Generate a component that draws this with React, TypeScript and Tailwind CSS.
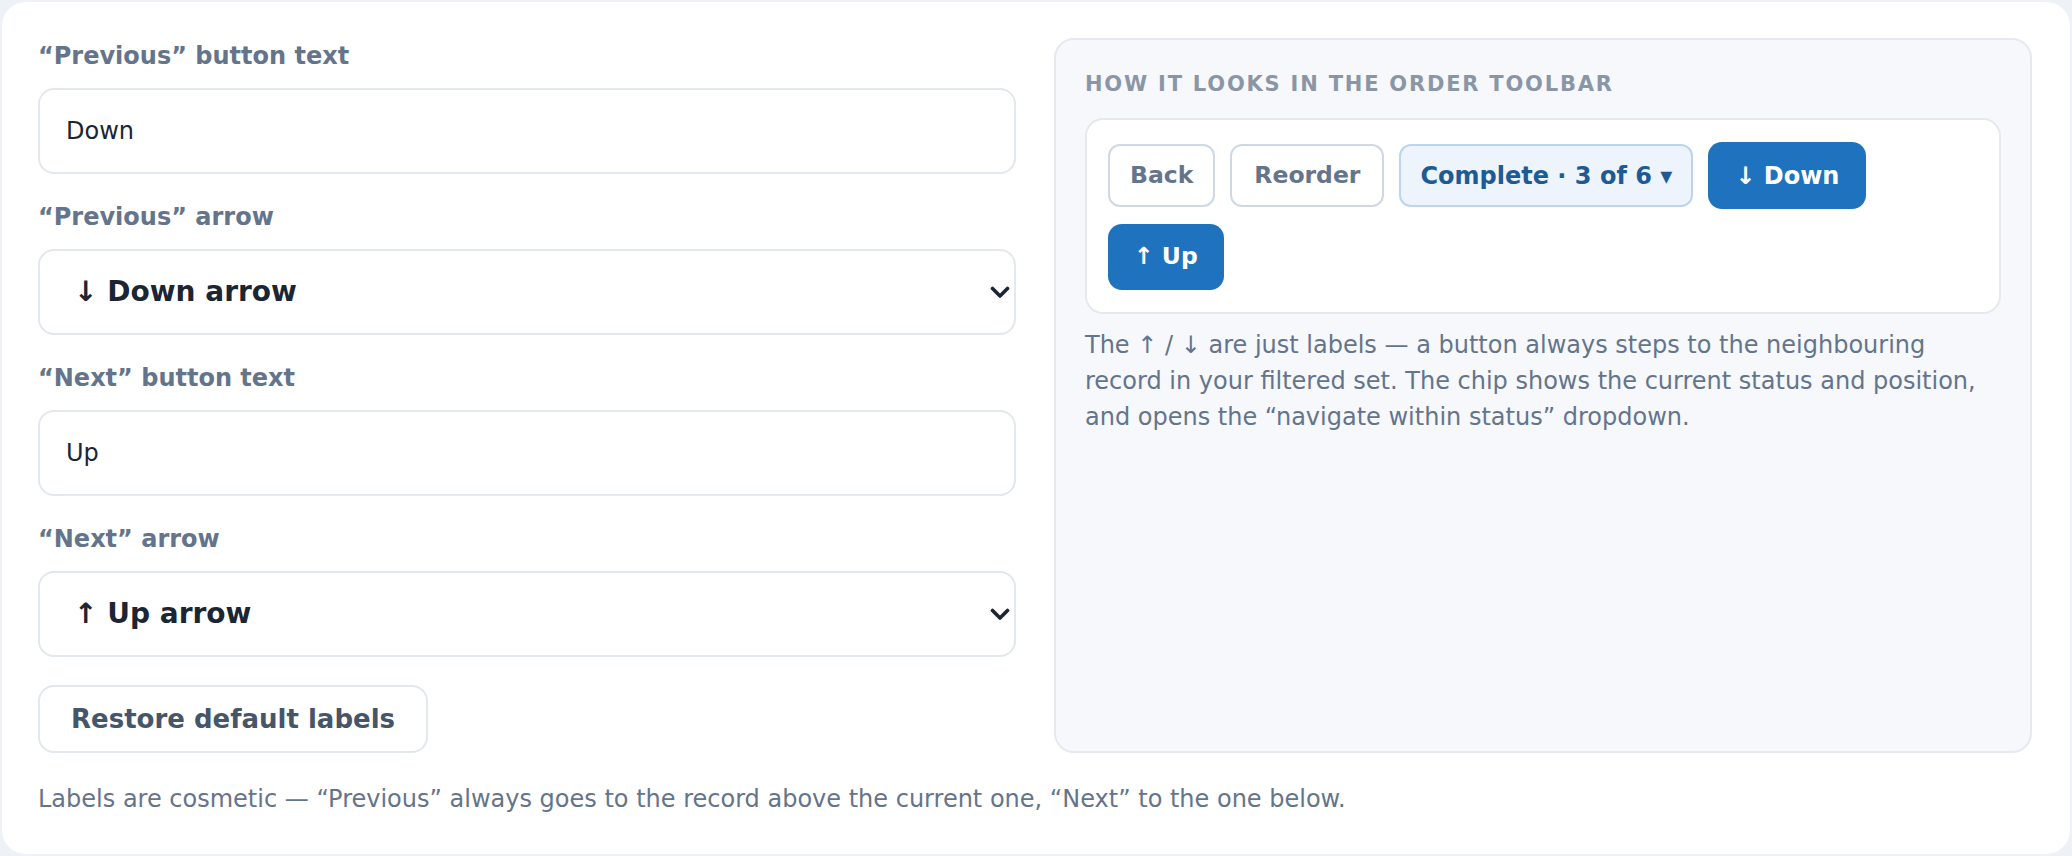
import React from "react";

function Chevron() {
  return (
    <svg width="20" height="13" viewBox="0 0 20 13" fill="none" aria-hidden="true">
      <path d="M2.5 2.5 L10 10 L17.5 2.5" stroke="#1b2533" strokeWidth="3.6" strokeLinecap="round" strokeLinejoin="round" />
    </svg>
  );
}

function TextField({ label, value }: { label: string; value: string }) {
  return (
    <div className="flex flex-col">
      <label className="block text-[24px] leading-[36px] font-bold text-[#64748b]">{label}</label>
      <div className="mt-[14px] h-[86px] rounded-[16px] border-2 border-[#e3e7ee] bg-white pl-[26px] flex items-center text-[24px] text-[#1b2533]">
        {value}
      </div>
    </div>
  );
}

function SelectField({ label, value }: { label: string; value: string }) {
  return (
    <div className="flex flex-col">
      <label className="block text-[24px] leading-[36px] font-bold text-[#64748b]">{label}</label>
      <div className="mt-[14px] h-[86px] rounded-[16px] border-2 border-[#e3e7ee] bg-white pl-[34px] pr-[4px] flex items-center justify-between text-[28px] font-bold text-[#1b2533]">
        <span>{value}</span>
        <Chevron />
      </div>
    </div>
  );
}

export default function App() {
  return (
    <div className="w-[2072px] h-[856px] bg-[#eef1f5] p-[2px] font-['DejaVu_Sans',sans-serif]">
      <div className="h-full bg-white rounded-[24px] pt-[36px] pl-[36px] pr-[38px] pb-[37px] flex flex-col">
        <div className="grid grid-cols-2 gap-[38px]">
          {/* Left column */}
          <div className="flex flex-col">
            <div className="flex flex-col gap-[25px]">
              <TextField label="“Previous” button text" value="Down" />
              <SelectField label="“Previous” arrow" value="↓ Down arrow" />
              <TextField label="“Next” button text" value="Up" />
              <SelectField label="“Next” arrow" value="↑ Up arrow" />
            </div>
            <div className="mt-[28px]">
              <button className="h-[68px] px-[31px] rounded-[16px] border-2 border-[#e3e7ee] bg-white text-[26px] font-bold text-[#475569]">
                Restore default labels
              </button>
            </div>
          </div>

          {/* Right column */}
          <div className="rounded-[20px] border-2 border-[#e6e9ef] bg-[#f6f8fb] p-[29px]">
            <div className="text-[21px] leading-[30px] font-bold uppercase tracking-[0.085em] text-[#8a96a6]">
              How it looks in the order toolbar
            </div>
            <div className="mt-[19px] rounded-[18px] border-2 border-[#e6e9ef] bg-white px-[21px] py-[22px] flex flex-wrap items-center gap-[15px]">
              <button className="h-[63px] px-[20px] rounded-[12px] border-2 border-[#cfd8e3] bg-white text-[23.5px] font-bold text-[#64748b]">
                Back
              </button>
              <button className="h-[63px] px-[22px] rounded-[12px] border-2 border-[#cfd8e3] bg-white text-[23.5px] font-bold text-[#64748b]">
                Reorder
              </button>
              <button className="h-[63px] px-[19px] rounded-[12px] border-2 border-[#bcd4ee] bg-[#edf4fc] text-[24px] font-bold text-[#1e5a94]">
                Complete · 3 of 6 ▾
              </button>
              <button className="h-[67px] px-[27px] rounded-[14px] bg-[#1f73be] text-[24px] font-bold text-white">
                ↓ Down
              </button>
              <button className="h-[66px] px-[26px] rounded-[14px] bg-[#1f73be] text-[23.5px] font-bold text-white">
                ↑ Up
              </button>
            </div>
            <p className="mt-[13px] text-[24px] leading-[36px] text-[#64748b]">
              The ↑ / ↓ are just labels — a button always steps to the neighbouring record in your filtered set. The chip shows the current status and position, and opens the “navigate within status” dropdown.
            </p>
          </div>
        </div>
        <p className="mt-[28px] text-[24px] leading-[36px] text-[#64748b]">
          Labels are cosmetic — “Previous” always goes to the record above the current one, “Next” to the one below.
        </p>
      </div>
    </div>
  );
}
